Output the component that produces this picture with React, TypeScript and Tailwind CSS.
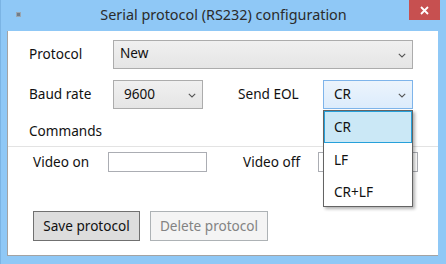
import React from "react";

const Chevron = () => (
  <svg width="8" height="5" viewBox="0 0 8 5" className="shrink-0">
    <path d="M0.8 0.8 L4 4 L7.2 0.8" fill="none" stroke="#555" strokeWidth="1.1" />
  </svg>
);

const Combo = ({
  value,
  className,
  textClass,
  children,
}: {
  value: string;
  className: string;
  textClass: string;
  children?: React.ReactNode;
}) => (
  <div className={"relative h-[29px] border flex items-center " + className}>
    <span className={"flex-1 " + textClass}>{value}</span>
    <span className="mr-[6px] mt-px">
      <Chevron />
    </span>
    {children}
  </div>
);

const eolOptions = ["CR", "LF", "CR+LF"];

export default function App() {
  return (
    <div
      className="w-[446px] h-[264px] bg-[#8fc8f6] border-l border-[#7bb4e4] overflow-hidden text-[#111] text-[13.6px]"
      style={{ fontFamily: '"Noto Sans", "Open Sans", sans-serif' }}
    >
      {/* Title bar */}
      <div className="relative h-[31px] flex items-center justify-center">
        <div className="absolute left-[15px] top-[12px] w-[5px] h-[5px] bg-[#6f7d8a] border border-[#9aa7b3]" />
        <span className="text-[14.4px] text-[#2b2b2b] -mt-px">
          Serial protocol (RS232) configuration
        </span>
        <div className="absolute top-0 right-[6px] w-[31px] h-[20px] bg-[#c75050] flex items-center justify-center">
          <svg width="9" height="9" viewBox="0 0 9 9">
            <path d="M1 1 L8 8 M8 1 L1 8" stroke="#fff" strokeWidth="1.8" />
          </svg>
        </div>
      </div>

      {/* Client area */}
      <div className="ml-[6px] w-[431px] h-[225px] bg-white border-l border-b border-[#a3a3a3] pt-[9px]">
        <div className="flex items-center h-[29px] pl-[21px]">
          <span className="w-[84px]">Protocol</span>
          <Combo
            value="New"
            className="w-[300px] border-[#acacac] bg-gradient-to-b from-[#f0f0f0] to-[#e5e5e5]"
            textClass="pl-[6px] -mt-[3px]"
          />
        </div>

        <div className="flex items-center h-[29px] mt-[11px] pl-[21px]">
          <span className="w-[84px]">Baud rate</span>
          <Combo
            value="9600"
            className="w-[90px] border-[#acacac] bg-gradient-to-b from-[#f0f0f0] to-[#e5e5e5]"
            textClass="pl-[10px]"
          />
          <span className="ml-[35px] w-[85px]">Send EOL</span>
          <Combo
            value="CR"
            className="w-[90px] border-[#7eb4ea] bg-gradient-to-b from-[#ecf4fc] to-[#dcecfc]"
            textClass="pl-[10px]"
          >
            <div className="absolute left-[-1px] top-[29px] w-[90px] h-[97px] bg-white border border-[#646464] shadow-[2px_2px_3px_rgba(0,0,0,0.3)] z-10 flex flex-col">
              <div className="h-[32px] bg-[#cbe8f6] border border-[#26a0da] flex items-center pl-[9px]">
                {eolOptions[0]}
              </div>
              <div className="h-[35px] flex items-center pl-[10px]">{eolOptions[1]}</div>
              <div className="h-[28px] flex items-center pl-[10px]">{eolOptions[2]}</div>
            </div>
          </Combo>
        </div>

        <div className="mt-[12px] h-[20px] leading-[20px] pl-[21px]">Commands</div>

        <div className="mt-[5px] h-px bg-[#e3e3e3]" />

        <div className="flex items-center h-[20px] mt-[5px] pl-[25px]">
          <span className="w-[75px]">Video on</span>
          <div className="w-[99px] h-[20px] border border-[#abadb3] bg-white" />
          <span className="ml-[36px] w-[75px]">Video off</span>
          <div className="w-[100px] h-[20px] border border-[#abadb3] bg-white" />
        </div>

        <div className="flex mt-[39px] pl-[25px] gap-[10px]">
          <div className="w-[107px] h-[30px] border border-[#707070] bg-[#dddddd] flex items-center justify-center">
            Save protocol
          </div>
          <div className="w-[118px] h-[30px] border border-[#adb2b5] bg-[#f4f4f4] text-[#838383] flex items-center justify-center">
            Delete protocol
          </div>
        </div>
      </div>
    </div>
  );
}
